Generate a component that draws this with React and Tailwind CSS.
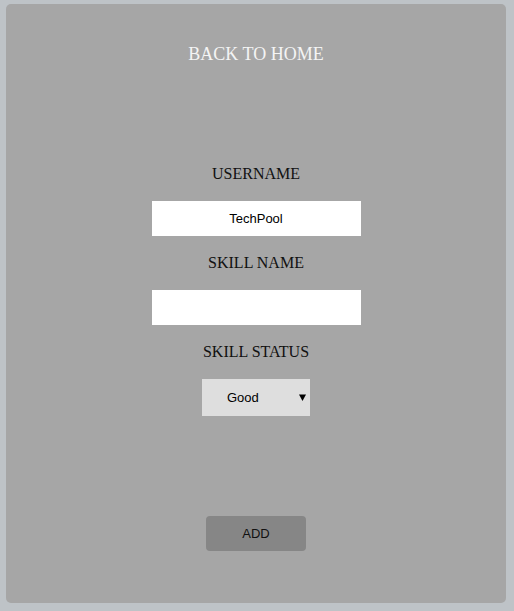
import React from "react";

const serif = { fontFamily: '"Liberation Serif", "Times New Roman", serif' };
const sans = { fontFamily: '"Liberation Sans", Arial, sans-serif' };

function Label({ children, className = "" }) {
  return (
    <div className={`text-[16px] leading-[18px] text-[#111] ${className}`} style={serif}>
      {children}
    </div>
  );
}

export default function App() {
  return (
    <div className="min-h-[611px] bg-[#bec3c7] pt-[4px] pl-[6px] pr-[8px] pb-[8px]">
      <div className="w-[500px] h-[599px] rounded-[5px] bg-[#a6a6a6] flex flex-col items-center pt-[40px]">
        <a className="text-[18px] leading-[21px] text-[#f4f4f4]" style={serif}>
          BACK TO HOME
        </a>
        <Label className="mt-[100px]">USERNAME</Label>
        <input
          readOnly
          value="TechPool"
          className="mt-[18px] w-[209px] h-[35px] bg-white text-center text-[13px] text-black outline-none"
          style={sans}
        />
        <Label className="mt-[18px]">SKILL NAME</Label>
        <input
          readOnly
          value=""
          className="mt-[18px] w-[209px] h-[35px] bg-white text-center text-[13px] text-black outline-none"
          style={sans}
        />
        <Label className="mt-[18px]">SKILL STATUS</Label>
        <div className="mt-[18px] w-[108px] h-[37px] bg-[#dedede] flex items-center relative">
          <span className="pl-[25px] text-[13px] text-black" style={sans}>Good</span>
          <svg className="absolute left-[97px] top-[15px]" width="7" height="7" viewBox="0 0 7 7">
            <polygon points="0,0.5 7,0.5 3.5,7" fill="#000" />
          </svg>
        </div>
        <button
          className="mt-[100px] w-[100px] h-[35px] rounded-[4px] bg-[#868686] text-[13px] text-[#111]"
          style={sans}
        >
          ADD
        </button>
      </div>
    </div>
  );
}
